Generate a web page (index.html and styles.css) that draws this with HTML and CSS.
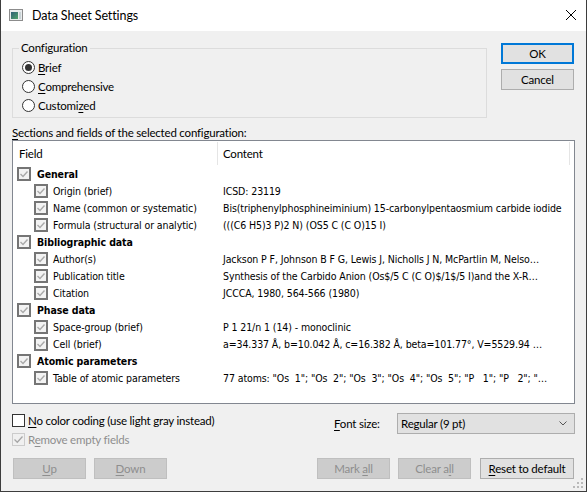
FILE: index.html
```html
<!DOCTYPE html>
<html lang="en">
<head>
<meta charset="utf-8">
<title>Data Sheet Settings</title>
<link rel="stylesheet" href="styles.css">
</head>
<body>
<div class="window">
  <div class="titlebar">
    <svg class="app-icon" viewBox="0 0 14 12" width="14" height="12">
      <defs>
        <linearGradient id="g" x1="0" y1="0" x2="1" y2="1">
          <stop offset="0" stop-color="#2f5f78"/>
          <stop offset="1" stop-color="#4fa36a"/>
        </linearGradient>
      </defs>
      <rect x="0.5" y="0.5" width="13" height="11" fill="#e9ecee" stroke="#8c8c8c"/>
      <rect x="2" y="3" width="7" height="7" fill="url(#g)"/>
      <rect x="10" y="3" width="2" height="7" fill="#c9d3d6"/>
    </svg>
    <span class="title">Data Sheet Settings</span>
    <svg class="close" viewBox="0 0 10 10" width="10" height="10">
      <path d="M0 0 L10 10 M10 0 L0 10" stroke="#000" stroke-width="1" fill="none"/>
    </svg>
  </div>

  <div class="body">
    <div class="top">
      <fieldset class="group">
        <legend>Configuration</legend>
        <div class="radio-row"><span class="radio"><span class="dot"></span></span><span><u>B</u>rief</span></div>
        <div class="radio-row"><span class="radio"></span><span><u>C</u>omprehensive</span></div>
        <div class="radio-row"><span class="radio"></span><span>Customi<u>z</u>ed</span></div>
      </fieldset>
      <div class="side-buttons">
        <button class="btn default">OK</button>
        <button class="btn">Cancel</button>
      </div>
    </div>

    <div class="caption"><u>S</u>ections and fields of the selected configuration:</div>

    <div class="list">
      <div class="list-head">
        <div class="head-field">Field</div>
        <div class="head-content">Content</div>
      </div>

      <div class="row section">
        <div class="cell-field"><span class="lcb"><svg viewBox="0 0 10 10"><path d="M1.5 5 L4 7.5 L8.5 2.5"/></svg></span><span class="label">General</span></div>
        <div class="cell-content"></div>
      </div>
      <div class="row item">
        <div class="cell-field"><span class="lcb"><svg viewBox="0 0 10 10"><path d="M1.5 5 L4 7.5 L8.5 2.5"/></svg></span><span class="label">Origin (brief)</span></div>
        <div class="cell-content">ICSD: 23119</div>
      </div>
      <div class="row item">
        <div class="cell-field"><span class="lcb"><svg viewBox="0 0 10 10"><path d="M1.5 5 L4 7.5 L8.5 2.5"/></svg></span><span class="label">Name (common or systematic)</span></div>
        <div class="cell-content">Bis(triphenylphosphineiminium) 15-carbonylpentaosmium carbide iodide</div>
      </div>
      <div class="row item">
        <div class="cell-field"><span class="lcb"><svg viewBox="0 0 10 10"><path d="M1.5 5 L4 7.5 L8.5 2.5"/></svg></span><span class="label">Formula (structural or analytic)</span></div>
        <div class="cell-content">(((C6 H5)3 P)2 N) (OS5 C (C O)15 I)</div>
      </div>

      <div class="row section">
        <div class="cell-field"><span class="lcb"><svg viewBox="0 0 10 10"><path d="M1.5 5 L4 7.5 L8.5 2.5"/></svg></span><span class="label">Bibliographic data</span></div>
        <div class="cell-content"></div>
      </div>
      <div class="row item">
        <div class="cell-field"><span class="lcb"><svg viewBox="0 0 10 10"><path d="M1.5 5 L4 7.5 L8.5 2.5"/></svg></span><span class="label">Author(s)</span></div>
        <div class="cell-content">Jackson P F, Johnson B F G, Lewis J, Nicholls J N, McPartlin M, Nelso…</div>
      </div>
      <div class="row item">
        <div class="cell-field"><span class="lcb"><svg viewBox="0 0 10 10"><path d="M1.5 5 L4 7.5 L8.5 2.5"/></svg></span><span class="label">Publication title</span></div>
        <div class="cell-content">Synthesis of the Carbido Anion (Os$/5 C (C O)$/1$/5 I)and the X-R…</div>
      </div>
      <div class="row item">
        <div class="cell-field"><span class="lcb"><svg viewBox="0 0 10 10"><path d="M1.5 5 L4 7.5 L8.5 2.5"/></svg></span><span class="label">Citation</span></div>
        <div class="cell-content">JCCCA, 1980, 564-566 (1980)</div>
      </div>

      <div class="row section">
        <div class="cell-field"><span class="lcb"><svg viewBox="0 0 10 10"><path d="M1.5 5 L4 7.5 L8.5 2.5"/></svg></span><span class="label">Phase data</span></div>
        <div class="cell-content"></div>
      </div>
      <div class="row item">
        <div class="cell-field"><span class="lcb"><svg viewBox="0 0 10 10"><path d="M1.5 5 L4 7.5 L8.5 2.5"/></svg></span><span class="label">Space-group (brief)</span></div>
        <div class="cell-content">P 1 21/n 1 (14) - monoclinic</div>
      </div>
      <div class="row item">
        <div class="cell-field"><span class="lcb"><svg viewBox="0 0 10 10"><path d="M1.5 5 L4 7.5 L8.5 2.5"/></svg></span><span class="label">Cell (brief)</span></div>
        <div class="cell-content">a=34.337 Å, b=10.042 Å, c=16.382 Å, beta=101.77°, V=5529.94 …</div>
      </div>

      <div class="row section">
        <div class="cell-field"><span class="lcb"><svg viewBox="0 0 10 10"><path d="M1.5 5 L4 7.5 L8.5 2.5"/></svg></span><span class="label">Atomic parameters</span></div>
        <div class="cell-content"></div>
      </div>
      <div class="row item">
        <div class="cell-field"><span class="lcb"><svg viewBox="0 0 10 10"><path d="M1.5 5 L4 7.5 L8.5 2.5"/></svg></span><span class="label">Table of atomic parameters</span></div>
        <div class="cell-content">77 atoms: "Os  1"; "Os  2"; "Os  3"; "Os  4"; "Os  5"; "P   1"; "P   2"; "…</div>
      </div>
    </div>

    <div class="options">
      <div class="checks">
        <div class="check-row"><span class="cbox"></span><span><u>N</u>o color coding (use light gray instead)</span></div>
        <div class="check-row disabled"><span class="cbox"><svg viewBox="0 0 11 11"><path d="M1.5 5.5 L4.3 8.3 L9.5 2.5"/></svg></span><span>R<u>e</u>move empty fields</span></div>
      </div>
      <div class="font-size">
        <span><u>F</u>ont size:</span>
        <div class="combo">
          <span>Regular (9 pt)</span>
          <svg class="chev" viewBox="0 0 8 5" width="8" height="5"><path d="M0.5 0.5 L4 4 L7.5 0.5"/></svg>
        </div>
      </div>
    </div>

    <div class="buttons">
      <button class="btn disabled"><u>U</u>p</button>
      <button class="btn disabled gap"><u>D</u>own</button>
      <button class="btn disabled push">Mark <u>a</u>ll</button>
      <button class="btn disabled gap">Clear a<u>l</u>l</button>
      <button class="btn wide"><u>R</u>eset to default</button>
    </div>
  </div>

  <svg class="grip" viewBox="0 0 11 11" width="11" height="11">
    <rect x="8" y="0" width="2" height="2"/>
    <rect x="4" y="4" width="2" height="2"/>
    <rect x="8" y="4" width="2" height="2"/>
    <rect x="0" y="8" width="2" height="2"/>
    <rect x="4" y="8" width="2" height="2"/>
    <rect x="8" y="8" width="2" height="2"/>
  </svg>
</div>
</body>
</html>
```
FILE: styles.css
```css
* { box-sizing: border-box; }
html, body { margin: 0; padding: 0; }
body {
  width: 587px;
  height: 492px;
  overflow: hidden;
  font-family: Lato, "Liberation Sans", sans-serif;
  font-size: 11.5px;
  letter-spacing: -0.2px;
  line-height: 14px;
  color: #000;
}
u { text-decoration-thickness: 1px; text-underline-offset: 2px; }

.window {
  position: relative;
  width: 587px;
  height: 492px;
  background: #f0f0f0;
  border: 1px solid #3d3d3d;
  border-top: none;
  display: flex;
  flex-direction: column;
}

/* title bar */
.titlebar {
  height: 31px;
  flex-shrink: 0;
  background: #fff;
  display: flex;
  align-items: center;
  padding-left: 8px;
}
.app-icon { display: block; margin-top: -1px; }
.title { margin-left: 9px; font-size: 12.5px; letter-spacing: -0.1px; }
.close { margin-left: auto; margin-right: 10px; display: block; margin-top: -1px; }

/* body */
.body {
  flex: 1;
  display: flex;
  flex-direction: column;
  padding: 10px 11px 0 11px;
}

.top { display: flex; align-items: flex-start; }
.group {
  margin: 0;
  width: 475px;
  border: 1px solid #dcdcdc;
  padding: 3px 0 2px 6px;
  min-width: 0;
}
.group legend { padding: 0 2px; line-height: 14px; }
.radio-row {
  height: 19px;
  display: flex;
  align-items: center;
  margin-left: 3px;
}
.radio {
  width: 13px;
  height: 13px;
  border: 1px solid #333;
  border-radius: 50%;
  background: #fff;
  margin-right: 3px;
  display: flex;
  align-items: center;
  justify-content: center;
}
.dot { width: 7px; height: 7px; border-radius: 50%; background: #333; }

.side-buttons {
  margin-left: 14px;
  margin-top: 2px;
  display: flex;
  flex-direction: column;
  gap: 5px;
}

.btn {
  width: 73px;
  height: 21px;
  padding: 0;
  background: #e1e1e1;
  border: 1px solid #adadad;
  font: inherit;
  letter-spacing: inherit;
  line-height: 14px;
  color: #000;
}
.btn.default { border: 2px solid #0078d7; }
.btn.disabled { background: #cccccc; border-color: #bfbfbf; color: #8e8e8e; }
.btn.gap { margin-left: 8px; }
.btn.push { margin-left: auto; }
.btn.wide { width: 94px; margin-left: 9px; }

.caption { margin-top: 8px; }

/* list */
.list {
  height: 264px;
  background: #fff;
  border: 1px solid #828790;
  font-family: "DejaVu Sans Condensed", "DejaVu Sans", sans-serif;
  font-size: 10.5px;
  letter-spacing: -0.1px;
}
.list-head {
  height: 24px;
  display: flex;
  font-family: Lato, "Liberation Sans", sans-serif;
  font-size: 11.5px;
  letter-spacing: -0.2px;
}
.head-field, .head-content {
  display: flex;
  align-items: center;
  border-right: 1px solid #e5e5e5;
  margin: 1px 0 0 0;
}
.head-field { width: 205px; padding-left: 6px; }
.head-content { width: 352px; padding-left: 5px; }

.row { height: 17px; display: flex; align-items: center; }
.cell-field { width: 205px; flex-shrink: 0; display: flex; align-items: center; }
.section .cell-field { padding-left: 4px; }
.section .label { font-weight: bold; margin-left: 6px; }
.item .cell-field { padding-left: 21px; }
.item .label { margin-left: 5px; }
.cell-content {
  padding-left: 5px;
  white-space: pre;
  overflow: hidden;
  width: 350px;
}

.lcb {
  width: 14px;
  height: 14px;
  border: 2px solid #757575;
  background: #f3f3f3;
  display: flex;
  align-items: center;
  justify-content: center;
}
.lcb svg { width: 10px; height: 10px; display: block; }
.lcb path { fill: none; stroke: #a9a9a9; stroke-width: 1.4; }

/* options */
.options { display: flex; margin-top: 7px; }
.checks { display: flex; flex-direction: column; }
.check-row { height: 19px; display: flex; align-items: center; }
.cbox {
  width: 13px;
  height: 13px;
  border: 1px solid #333;
  background: #fff;
  margin-right: 3px;
  display: flex;
  align-items: center;
  justify-content: center;
}
.cbox svg { width: 11px; height: 11px; display: block; }
.cbox path { fill: none; stroke: #a6a6a6; stroke-width: 1.3; }
.check-row.disabled { color: #8e8e8e; }
.check-row.disabled .cbox { border-color: #cccccc; background: #f0f0f0; }

.font-size {
  margin-left: auto;
  margin-top: 2px;
  width: 241px;
  height: 21px;
  display: flex;
  align-items: center;
  justify-content: space-between;
}
.combo {
  width: 178px;
  height: 21px;
  background: #e1e1e1;
  border: 1px solid #adadad;
  display: flex;
  align-items: center;
  padding-left: 3px;
}
.chev { margin-left: auto; margin-right: 7px; display: block; }
.chev path { fill: none; stroke: #555; stroke-width: 1; }

.buttons {
  display: flex;
  margin-top: 9px;
  padding: 0 1px;
}

.grip { position: absolute; right: 2px; bottom: 2px; display: block; }
.grip rect { fill: #b9b9b9; }
```
